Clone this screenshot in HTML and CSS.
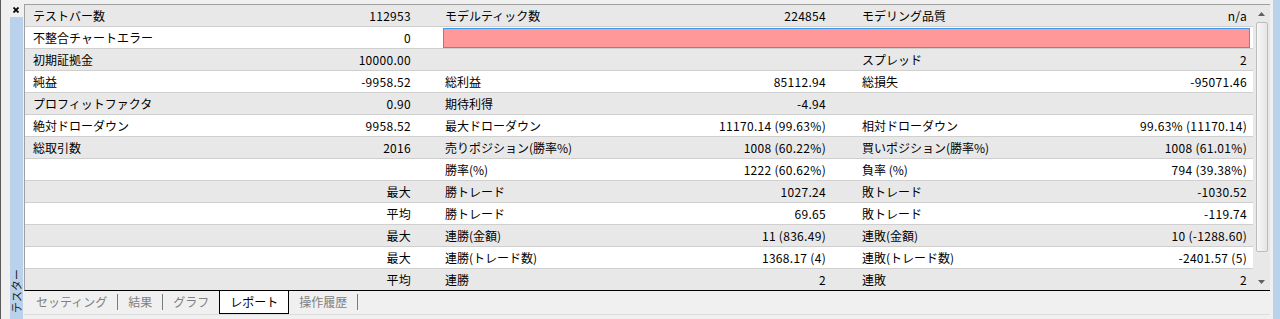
FILE: index.html
```html
<!DOCTYPE html>
<html lang="ja">
<head>
    <meta charset="UTF-8">
    <title>テスター - レポート</title>
    <link rel="stylesheet" href="styles.css">
</head>
<body>

    <div class="tester">
        <div class="side">
            <div class="close">
                <svg width="6" height="6" viewBox="0 0 6 6"><path d="M0.5 0.5 L5.5 5.5 M5.5 0.5 L0.5 5.5" stroke="#000" stroke-width="1.8"/></svg>
            </div>
            <div class="side-strip">
                <span class="side-title">テスター</span>
            </div>
        </div>

        <div class="panel">
            <div class="report">
                <div class="grid">
                    <div class="row">
                        <span class="lbl first">テストバー数</span><span class="val">112953</span><span></span>
                        <span class="lbl">モデルティック数</span><span class="val">224854</span><span></span>
                        <span class="lbl last">モデリング品質</span><span class="val end">n/a</span>
                    </div>
                    <div class="row">
                        <span class="lbl first">不整合チャートエラー</span><span class="val">0</span><span></span>
                        <span class="quality-bar"></span>
                    </div>
                    <div class="row">
                        <span class="lbl first">初期証拠金</span><span class="val">10000.00</span><span></span>
                        <span class="lbl"></span><span class="val"></span><span></span>
                        <span class="lbl last">スプレッド</span><span class="val end">2</span>
                    </div>
                    <div class="row">
                        <span class="lbl first">純益</span><span class="val">-9958.52</span><span></span>
                        <span class="lbl">総利益</span><span class="val">85112.94</span><span></span>
                        <span class="lbl last">総損失</span><span class="val end">-95071.46</span>
                    </div>
                    <div class="row">
                        <span class="lbl first">プロフィットファクタ</span><span class="val">0.90</span><span></span>
                        <span class="lbl">期待利得</span><span class="val">-4.94</span><span></span>
                        <span class="lbl last"></span><span class="val end"></span>
                    </div>
                    <div class="row">
                        <span class="lbl first">絶対ドローダウン</span><span class="val">9958.52</span><span></span>
                        <span class="lbl">最大ドローダウン</span><span class="val">11170.14 (99.63%)</span><span></span>
                        <span class="lbl last">相対ドローダウン</span><span class="val end">99.63% (11170.14)</span>
                    </div>
                    <div class="row">
                        <span class="lbl first">総取引数</span><span class="val">2016</span><span></span>
                        <span class="lbl">売りポジション(勝率%)</span><span class="val">1008 (60.22%)</span><span></span>
                        <span class="lbl last">買いポジション(勝率%)</span><span class="val end">1008 (61.01%)</span>
                    </div>
                    <div class="row">
                        <span class="lbl first"></span><span class="val"></span><span></span>
                        <span class="lbl">勝率(%)</span><span class="val">1222 (60.62%)</span><span></span>
                        <span class="lbl last">負率 (%)</span><span class="val end">794 (39.38%)</span>
                    </div>
                    <div class="row">
                        <span class="lbl first"></span><span class="val">最大</span><span></span>
                        <span class="lbl">勝トレード</span><span class="val">1027.24</span><span></span>
                        <span class="lbl last">敗トレード</span><span class="val end">-1030.52</span>
                    </div>
                    <div class="row">
                        <span class="lbl first"></span><span class="val">平均</span><span></span>
                        <span class="lbl">勝トレード</span><span class="val">69.65</span><span></span>
                        <span class="lbl last">敗トレード</span><span class="val end">-119.74</span>
                    </div>
                    <div class="row">
                        <span class="lbl first"></span><span class="val">最大</span><span></span>
                        <span class="lbl">連勝(金額)</span><span class="val">11 (836.49)</span><span></span>
                        <span class="lbl last">連敗(金額)</span><span class="val end">10 (-1288.60)</span>
                    </div>
                    <div class="row">
                        <span class="lbl first"></span><span class="val">最大</span><span></span>
                        <span class="lbl">連勝(トレード数)</span><span class="val">1368.17 (4)</span><span></span>
                        <span class="lbl last">連敗(トレード数)</span><span class="val end">-2401.57 (5)</span>
                    </div>
                    <div class="row">
                        <span class="lbl first"></span><span class="val">平均</span><span></span>
                        <span class="lbl">連勝</span><span class="val">2</span><span></span>
                        <span class="lbl last">連敗</span><span class="val end">2</span>
                    </div>
                </div>

                <!-- scrollbar -->
                <div class="scrollbar">
                    <div class="arrow">
                        <svg width="7" height="4" viewBox="0 0 7 4"><path d="M0 4 L3.5 0 L7 4 Z" fill="#606060"/></svg>
                    </div>
                    <div class="thumb"></div>
                    <div class="track"></div>
                    <div class="arrow">
                        <svg width="7" height="4" viewBox="0 0 7 4"><path d="M0 0 L3.5 4 L7 0 Z" fill="#606060"/></svg>
                    </div>
                </div>
            </div>

            <div class="tabs">
                <span class="tab">セッティング</span>
                <span class="tab">結果</span>
                <span class="tab">グラフ</span>
                <span class="tab active">レポート</span>
                <span class="tab">操作履歴</span>
            </div>
        </div>

        <div class="right-edge"></div>
    </div>

</body>
</html>
```

FILE: styles.css
```css
body {
    margin: 0;
    background-color: #f0f0f0;
    font-family: "Noto Sans CJK JP", "Noto Sans", sans-serif;
    font-size: 12px;
    color: #000;
}

.tester {
    display: flex;
    height: 319px;
    border-left: 1px solid #5a5a5a;
    overflow: hidden;
}

/* left bar with close button and vertical title */
.side {
    width: 23px;
    display: flex;
    flex-direction: column;
}

.close {
    height: 16px;
    padding-left: 12px;
    padding-top: 7px;
    box-sizing: border-box;
    line-height: 0;
}

.side-strip {
    flex: 1;
    margin-left: 9px;
    width: 13px;
    margin-top: 1px;
    background-color: #b9d1ea;
    display: flex;
    align-items: flex-end;
    justify-content: center;
}

.side-title {
    writing-mode: vertical-rl;
    text-orientation: sideways;
    transform: rotate(180deg);
    font-size: 11px;
    line-height: 13px;
    color: #222;
    margin-bottom: 6px;
}

.panel {
    width: 1246px;
    display: flex;
    flex-direction: column;
    padding-top: 4px;
}

.report {
    display: flex;
    border-top: 1px solid #a0a0a0;
    border-left: 1px solid #a0a0a0;
    border-bottom: 1px solid #000;
}

.grid {
    width: 1228px;
}

.row {
    display: grid;
    grid-template-columns: 200px 191px 25px 200px 190px 26px 196px 200px;
    height: 21px;
    line-height: 21px;
    border-bottom: 1px solid #cfcfcf;
    background-color: #fff;
    white-space: nowrap;
}

.row:nth-child(odd) {
    background-color: #e8e8e8;
}

.row:last-child {
    border-bottom: none;
}

.lbl {
    padding-left: 4px;
}

.lbl.first {
    padding-left: 8px;
}

.lbl.last {
    padding-left: 5px;
}

.val {
    text-align: right;
    padding-right: 5px;
    letter-spacing: 0.3px;
}

.val.end {
    padding-right: 6px;
}

.quality-bar {
    grid-column: 4 / 9;
    margin: 1px 3px 0 2px;
    background-color: #ff9999;
    border: 1px solid #3d9bef;
}

.scrollbar {
    width: 17px;
    background-color: #e8e8e8;
    display: flex;
    flex-direction: column;
    align-items: center;
}

.arrow {
    height: 17px;
    display: flex;
    align-items: center;
    justify-content: center;
    line-height: 0;
}

.thumb {
    width: 10px;
    height: 228px;
    margin-left: 1px;
    border: 1px solid #bdbdbd;
    border-radius: 2px;
    background: linear-gradient(to right, #f7f7f7, #e6e6e6);
}

.track {
    flex: 1;
}

/* tab strip */
.tabs {
    display: flex;
    height: 23px;
    padding-left: 2px;
    border-bottom: 1px solid #dcdcdc;
}

.tab {
    padding: 0 10px;
    height: 16px;
    margin-top: 3px;
    line-height: 16px;
    color: #808080;
    border-right: 1px solid #7a7a7a;
    font-size: 12px;
}

.tab:nth-child(3) {
    border-right: none;
}

.tab.active {
    height: 23px;
    margin-top: 0;
    line-height: 22px;
    background-color: #fff;
    color: #000;
    border-left: 1px solid #000;
    border-right: 1px solid #000;
    border-bottom: 1px solid #000;
    box-sizing: border-box;
}

.right-edge {
    width: 7px;
    margin-left: 3px;
    background-color: #b9d1ea;
}
```
